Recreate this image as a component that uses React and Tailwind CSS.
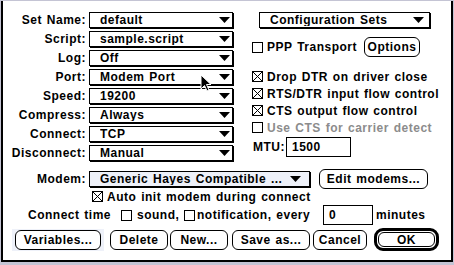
import React from 'react';

const Arrow = () => (
  <svg width="11" height="6" viewBox="0 0 11 6" className="shrink-0">
    <path d="M0 0H11L5.5 6Z" fill="#000" />
  </svg>
);

const Popup = ({ children, className = '', arrowClass = 'mr-[2px]' }) => (
  <div className={`h-[16px] border border-black shadow-[1px_1px_0_#000] flex items-center pl-[10px] ${className}`}>
    <span className="flex-1 leading-none whitespace-nowrap overflow-hidden">{children}</span>
    <span className={arrowClass}><Arrow /></span>
  </div>
);

const Check = ({ checked, className = '' }) => (
  <svg width="11" height="11" viewBox="0 0 11 11" className={`shrink-0 ${className}`}>
    <rect x="0.5" y="0.5" width="10" height="10" fill="#fff" stroke="#000" />
    {checked && <path d="M1 1L10 10M10 1L1 10" stroke="#000" strokeWidth="1" />}
  </svg>
);

const Button = ({ children, className = '' }) => (
  <div className={`h-[20px] border border-black rounded-[6px] bg-white flex items-center justify-center leading-none ${className}`}>
    {children}
  </div>
);

const fields = [
  ['Set Name:', 'default'],
  ['Script:', 'sample.script'],
  ['Log:', 'Off'],
  ['Port:', 'Modem Port'],
  ['Speed:', '19200'],
  ['Compress:', 'Always'],
  ['Connect:', 'TCP'],
  ['Disconnect:', 'Manual'],
];

const flags = [
  ['Drop DTR on driver close', true, false],
  ['RTS/DTR input flow control', true, false],
  ['CTS output flow control', true, false],
  ['Use CTS for carrier detect', false, true],
];

export default function App() {
  return (
    <div className="w-[454px] h-[265px] bg-[#c4c4d4] pt-[1px] pl-[1px] font-['Liberation_Sans',Arial,sans-serif] font-bold text-[12px] tracking-[0.5px] [word-spacing:1px] text-black">
      <div className="relative w-[452px] h-[261px] bg-white border-l-2 border-r-2 border-b-2 border-black">
        {/* top section */}
        <div className="flex items-start pt-[11px]">
          <div className="flex flex-col gap-[3px]">
            {fields.map(([label, value]) => (
              <div key={label} className="flex items-center h-[16px]">
                <span className="w-[83px] text-right leading-none whitespace-nowrap">{label}</span>
                <Popup className="ml-[3px] w-[144px]">{value}</Popup>
              </div>
            ))}
          </div>

          <div className="ml-[19px] flex flex-col">
            <Popup className="ml-[7px] w-[171px]" arrowClass="mr-[5px]">Configuration Sets</Popup>
            <div className="mt-[9px] h-[20px] flex items-center">
              <Check />
              <span className="ml-[4px] w-[93px] leading-none whitespace-nowrap">PPP Transport</span>
              <Button className="ml-[4px] w-[56px]">Options</Button>
            </div>
            <div className="mt-[11px] flex flex-col">
              {flags.map(([label, on, dim]) => (
                <div key={label} className="h-[17px] flex items-center">
                  <Check checked={on} />
                  <span className={`ml-[4px] leading-none whitespace-nowrap ${dim ? 'text-[#8c8c8c]' : ''}`}>{label}</span>
                </div>
              ))}
            </div>
            <div className="mt-[1px] h-[20px] flex items-center">
              <span className="ml-[1px] w-[33px] leading-none">MTU:</span>
              <div className="w-[65px] h-[20px] border border-black flex items-center pl-[5px] leading-none">1500</div>
            </div>
          </div>
        </div>

        {/* modem row */}
        <div className="mt-[8px] h-[19px] flex items-center">
          <span className="w-[83px] text-right leading-none">Modem:</span>
          <Popup className="ml-[3px] w-[221px] bg-[#eef1f9]" arrowClass="mr-[8px]">Generic Hayes Compatible ...</Popup>
          <Button className="ml-[9px] w-[109px] h-[19px]">Edit modems...</Button>
        </div>

        {/* auto init */}
        <div className="h-[17px] flex items-center pl-[89px]">
          <Check checked />
          <span className="ml-[4px] leading-none whitespace-nowrap">Auto init modem during connect</span>
        </div>

        {/* connect time */}
        <div className="h-[20px] flex items-center pl-[25px] whitespace-nowrap leading-none">
          <span className="w-[86px]">Connect time</span>
          <Check className="ml-[7px]" />
          <span className="ml-[5px] w-[43px]">sound,</span>
          <Check className="ml-[4px]" />
          <span className="ml-[2px] w-[125px]">notification, every</span>
          <div className="ml-[1px] w-[50px] h-[20px] border border-black flex items-center pl-[5px]">0</div>
          <span className="ml-[3px]">minutes</span>
        </div>

        {/* buttons */}
        <div className="mt-[3px] h-[23px] flex items-center">
          <div className="ml-[9px] w-[92px] h-[22px] bg-[#eef1f9] flex items-center justify-center">
            <Button className="w-[86px] bg-[#eef1f9]">Variables...</Button>
          </div>
          <Button className="ml-[6px] w-[58px]">Delete</Button>
          <Button className="ml-[2px] w-[58px]">New...</Button>
          <Button className="ml-[4px] w-[78px]">Save as...</Button>
          <Button className="ml-[3px] w-[54px]">Cancel</Button>
          <div className="ml-[7px] w-[65px] h-[23px] border-[3px] border-black rounded-[9px] p-[1px] flex">
            <Button className="flex-1 h-auto rounded-[5px]">OK</Button>
          </div>
        </div>

        {/* mouse pointer over the Port popup */}
        <svg className="absolute left-[197px] top-[73px]" width="12" height="19" viewBox="0 0 12 19">
          <path d="M1 1V15L4.5 11.5L7 17L9 16L6.5 10.5H11Z" fill="#000" stroke="#fff" strokeWidth="1" strokeLinejoin="round" />
        </svg>
      </div>
    </div>
  );
}
